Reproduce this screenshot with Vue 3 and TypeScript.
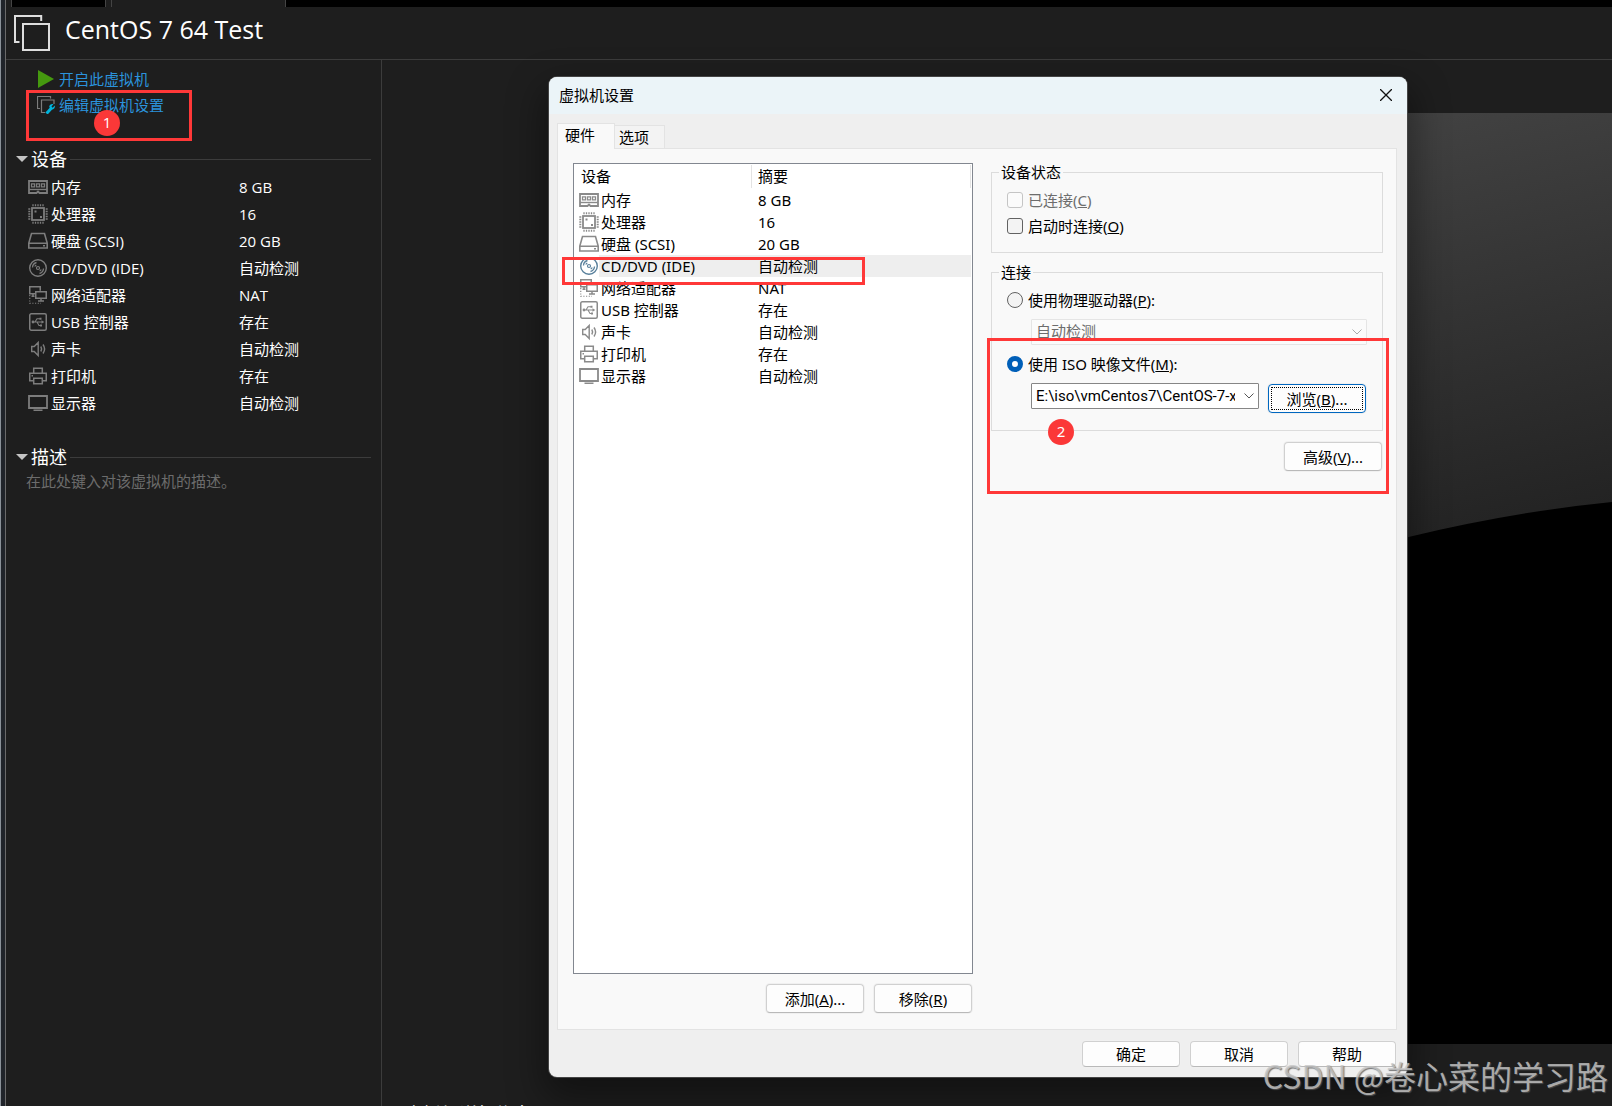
<script setup lang="ts">
import { ref } from 'vue'

interface Device {
  icon: string
  name: string
  summary: string
}

const devices: Device[] = [
  { icon: 'memory', name: '内存', summary: '8 GB' },
  { icon: 'cpu', name: '处理器', summary: '16' },
  { icon: 'disk', name: '硬盘 (SCSI)', summary: '20 GB' },
  { icon: 'cd', name: 'CD/DVD (IDE)', summary: '自动检测' },
  { icon: 'network', name: '网络适配器', summary: 'NAT' },
  { icon: 'usb', name: 'USB 控制器', summary: '存在' },
  { icon: 'sound', name: '声卡', summary: '自动检测' },
  { icon: 'printer', name: '打印机', summary: '存在' },
  { icon: 'display', name: '显示器', summary: '自动检测' },
]

const selected = ref('cd')
const connectAtPowerOn = ref(false)
const source = ref('iso')
const isoPath = 'E:\\iso\\vmCentos7\\CentOS-7-x86'
</script>

<template>
  <div class="app">
    <svg class="sprite" aria-hidden="true">
      <symbol id="memory" viewBox="0 0 20 20">
        <path d="M1 4h18v12h-7.500l-1.500-1.500-1.500 1.500H1z" fill="none" stroke="currentColor" stroke-width="1.800" />
        <path d="M1 12.500h18" stroke="currentColor" stroke-width="1.400" />
        <path d="M3.500 6.800h3v3h-3zM8.500 6.800h3v3h-3zM13.500 6.800h3v3h-3z" fill="none" stroke="currentColor" stroke-width="1.300" />
      </symbol>
      <symbol id="cpu" viewBox="0 0 20 20">
        <rect x="4" y="4" width="12" height="12" fill="none" stroke="currentColor" stroke-width="1.800" />
        <path d="M5 .3v2M7.500.3v2M10 .3v2M12.500.3v2M15 .3v2M5 17.700v2M7.500 17.700v2M10 17.700v2M12.500 17.700v2M15 17.700v2M.3 5h2M.3 7.500h2M.3 10h2M.3 12.500h2M.3 15h2M17.700 5h2M17.700 7.500h2M17.700 10h2M17.700 12.500h2M17.700 15h2" stroke="currentColor" stroke-width="1.300" />
        <path d="M6.500 6.500h2v2h-2zM12 12h2v2h-2z" fill="currentColor" />
      </symbol>
      <symbol id="disk" viewBox="0 0 20 20">
        <path d="M3.500 2.500h13L19.200 12v5H.8v-5zM.8 12.200h18.400" fill="none" stroke="currentColor" stroke-width="1.600" />
        <path d="M15 14h2v1.500h-2z" fill="currentColor" />
      </symbol>
      <symbol id="cd" viewBox="0 0 20 20">
        <circle cx="10" cy="10" r="8.300" fill="none" stroke="currentColor" stroke-width="1.400" />
        <circle cx="10" cy="10" r="1.500" fill="none" stroke="currentColor" stroke-width="1.200" />
        <path d="M4.500 9.500a5.500 5.500 0 0 1 4-5M15.500 10.500a5.500 5.500 0 0 1-4 5M6.800 8.500a3.500 3.500 0 0 1 1.500-1.500M13.200 11.500a3.500 3.500 0 0 1-1.500 1.500" fill="none" stroke="currentColor" stroke-width="1.300" />
      </symbol>
      <symbol id="network" viewBox="0 0 20 20">
        <path d="M7 8.800H1.750v-7h10.500v4M5 8.800v2.500M3.500 11.300h3M7.750 6.750h10.500v6.500H7.750zM13 13.300v2.400M10 16h6" fill="none" stroke="currentColor" stroke-width="1.500" />
        <path d="M1.750 10v8.250H13" fill="none" stroke="currentColor" stroke-width="1.200" stroke-dasharray="1.200 1.500" />
      </symbol>
      <symbol id="usb" viewBox="0 0 20 20">
        <rect x="1.750" y="1.750" width="16.500" height="16.500" rx="1.500" fill="none" stroke="currentColor" stroke-width="1.500" />
        <path d="M5 10h9M7 10l2-3.200h3M9 10l2 3.500h2" fill="none" stroke="currentColor" stroke-width="1.100" />
        <path d="M13.500 8.300l2.800 1.700-2.800 1.700zM11.500 5.800h2v2h-2zM12 12.500h2v2h-2z" fill="currentColor" />
        <circle cx="5" cy="10" r="1.400" fill="currentColor" />
      </symbol>
      <symbol id="sound" viewBox="0 0 20 20">
        <path d="M3.700 7.500h2.500l4-4v13l-4-4H3.700zM12.800 7.500q1.600 2.500 0 5M15 5.500q3.200 4.500 0 9" fill="none" stroke="currentColor" stroke-width="1.400" />
      </symbol>
      <symbol id="printer" viewBox="0 0 20 20">
        <path d="M5.700 7V2.200h8.600V7M5.500 14.800H1.750V7.200h16.500v7.600H14.500M5.700 12.200h8.600v5.600H5.700z" fill="none" stroke="currentColor" stroke-width="1.500" />
        <path d="M3.500 9h1.500v1.500H3.500z" fill="currentColor" />
      </symbol>
      <symbol id="display" viewBox="0 0 20 20">
        <path d="M1 3h18v12H1z" fill="none" stroke="currentColor" stroke-width="1.800" />
        <path d="M5.500 16.500h9v1.500h-9z" fill="currentColor" />
      </symbol>
    </svg>

    <div class="edge"></div>
    <div class="workspace">
      <div class="tabstrip">
        <span class="tab-gap"></span>
        <span class="tab-back"></span>
        <span class="tab-gap"></span>
        <span class="tab-front"></span>
      </div>

      <header class="header">
        <svg class="vm-icon" viewBox="0 0 36 36" aria-hidden="true">
          <path d="M27.200 6V1H1v26h4.500M9 9h26v26H9z" fill="none" stroke="#dedede" stroke-width="2" />
        </svg>
        <h1>CentOS 7 64 Test</h1>
      </header>

      <div class="content">
        <aside class="sidebar">
          <nav class="actions">
            <a href="#start">
              <svg viewBox="0 0 18 18" aria-hidden="true"><path d="M1 0v18l16-9z" fill="#45990f" /></svg>
              开启此虚拟机
            </a>
            <a href="#settings">
              <svg viewBox="0 0 18 18" aria-hidden="true">
                <path d="M13.500 2.500v-2H.5v12h2.500M17 8V4H4.500v12.500H8" fill="none" stroke="#7c7c7c" stroke-width="1.200" />
                <path d="M9.500 17.500l5-5.500" stroke="#00b4dc" stroke-width="3" />
                <path d="M18 9.500l-2.500 2.200-1-1.200L16.500 8q-4-.5-4.300 3l2.300 2.500q3.500 0 3.500-4z" fill="#00b4dc" />
              </svg>
              编辑虚拟机设置
            </a>
            <span class="mark mark-edit"></span>
            <span class="badge badge-one">1</span>
          </nav>

          <section>
            <h2><span class="caret"></span>设备</h2>
            <table class="summary">
              <tbody>
                <tr v-for="d in devices" :key="d.icon">
                  <td>
                    <div class="device">
                      <svg class="icon" aria-hidden="true"><use :href="'#' + d.icon" /></svg>
                      <span>{{ d.name }}</span>
                    </div>
                  </td>
                  <td>{{ d.summary }}</td>
                </tr>
              </tbody>
            </table>
          </section>

          <section>
            <h2><span class="caret"></span>描述</h2>
            <p class="placeholder">在此处键入对该虚拟机的描述。</p>
          </section>
        </aside>

        <main class="console">
          <div class="details">
            <h2><span class="caret"></span>虚拟机详细信息</h2>
          </div>
          <svg class="screen" viewBox="0 0 410 931" preserveAspectRatio="none" aria-hidden="true">
            <defs>
              <linearGradient id="glow" gradientUnits="userSpaceOnUse" x1="200" y1="0" x2="310" y2="430">
                <stop offset="0" stop-color="#424242" />
                <stop offset="1" stop-color="#222" />
              </linearGradient>
            </defs>
            <path d="M0 0h410v931H0z" fill="url(#glow)" />
            <path d="M0 485Q120 445 205 424Q309 399 410 389V931H0z" fill="#000" />
          </svg>
        </main>
      </div>
    </div>

    <div class="dialog" role="dialog" aria-labelledby="dialog-title">
      <div class="titlebar">
        <h3 id="dialog-title">虚拟机设置</h3>
        <button class="close" type="button" aria-label="关闭">
          <svg viewBox="0 0 12 12" aria-hidden="true"><path d="M0 0l12 12M12 0L0 12" stroke="#111" stroke-width="1.300" /></svg>
        </button>
      </div>

      <div class="dialog-body">
        <div class="tabs" role="tablist">
          <button class="tab active" type="button" role="tab" aria-selected="true">硬件</button>
          <button class="tab" type="button" role="tab" aria-selected="false">选项</button>
        </div>

        <div class="panel">
          <div class="hardware">
            <div class="listbox">
              <table>
                <colgroup><col class="col-name" /><col /></colgroup>
                <thead>
                  <tr>
                    <th><div>设备</div></th>
                    <th><div>摘要</div></th>
                  </tr>
                </thead>
                <tbody>
                  <tr v-for="d in devices" :key="d.icon" :class="{ selected: d.icon === selected }" @click="selected = d.icon">
                    <td>
                      <div class="device">
                        <svg class="icon" aria-hidden="true"><use :href="'#' + d.icon" /></svg>
                        <span>{{ d.name }}</span>
                      </div>
                    </td>
                    <td>{{ d.summary }}</td>
                  </tr>
                </tbody>
              </table>
            </div>
            <div class="buttons">
              <button class="btn" type="button">添加(<u>A</u>)...</button>
              <button class="btn" type="button">移除(<u>R</u>)</button>
            </div>
            <span class="mark mark-cd"></span>
          </div>

          <form class="options" @submit.prevent>
            <fieldset>
              <legend>设备状态</legend>
              <label class="choice disabled"><input type="checkbox" disabled /><span>已连接(<u>C</u>)</span></label>
              <label class="choice"><input v-model="connectAtPowerOn" type="checkbox" /><span>启动时连接(<u>O</u>)</span></label>
            </fieldset>

            <fieldset class="connection">
              <legend>连接</legend>
              <label class="choice"><input v-model="source" type="radio" name="source" value="drive" /><span>使用物理驱动器(<u>P</u>):</span></label>
              <div class="combo disabled">
                <select aria-label="物理驱动器" disabled><option>自动检测</option></select>
                <svg viewBox="0 0 10 6" aria-hidden="true"><path d="M.5.500L5 5 9.500.500" fill="none" stroke="currentColor" /></svg>
              </div>
              <label class="choice"><input v-model="source" type="radio" name="source" value="iso" /><span>使用 ISO 映像文件(<u>M</u>):</span></label>
              <div class="file">
                <div class="combo">
                  <select aria-label="ISO 映像文件"><option>{{ isoPath }}</option></select>
                  <svg viewBox="0 0 10 6" aria-hidden="true"><path d="M.5.500L5 5 9.500.500" fill="none" stroke="currentColor" /></svg>
                </div>
                <button class="btn focused" type="button">浏览(<u>B</u>)...</button>
              </div>
            </fieldset>

            <div class="buttons advanced">
              <button class="btn" type="button">高级(<u>V</u>)...</button>
            </div>
            <span class="mark mark-iso"></span>
            <span class="badge badge-two">2</span>
          </form>
        </div>

        <div class="buttons footer">
          <button class="btn" type="button">确定</button>
          <button class="btn" type="button">取消</button>
          <button class="btn" type="button">帮助</button>
        </div>
      </div>
    </div>

    <div class="watermark">CSDN @卷心菜的学习路</div>
  </div>
</template>

<style>
body {
  background: #1e1e1e;
}
</style>

<style scoped>
* {
  box-sizing: border-box;
}

.app {
  position: relative;
  display: flex;
  height: 100vh;
  overflow: hidden;
  background: #1e1e1e;
  color: #fff;
  font: 15px/20px "Open Sans", "Noto Sans CJK SC", sans-serif;
}

.sprite {
  position: absolute;
  width: 0;
  height: 0;
}

h1,
h2,
h3,
p {
  margin: 0;
  font-weight: 400;
}

.edge {
  flex: none;
  width: 6px;
  border-left: 1px solid #8b9299;
  border-right: 1px solid #6a6a6a;
  background: #20242a;
}

.workspace {
  flex: 1;
  min-width: 0;
  display: flex;
  flex-direction: column;
}

.tabstrip {
  flex: none;
  display: flex;
  height: 7px;
  background: #000;
}

.tab-gap {
  width: 5px;
  background: #1e1e1e;
}

.tab-back {
  width: 95px;
  border: solid #444;
  border-width: 0 1px;
}

.tab-front {
  width: 175px;
  border: solid #444;
  border-width: 0 1px;
  background: #1e1e1e;
}

.header {
  flex: none;
  display: flex;
  gap: 15px;
  height: 53px;
  padding: 8px 8px 0;
  border-bottom: 1px solid #3c3c3c;
}

.vm-icon {
  width: 36px;
  height: 36px;
}

h1 {
  font-size: 25px;
  line-height: 28px;
}

.content {
  flex: 1;
  min-height: 0;
  display: flex;
}

.sidebar {
  flex: none;
  width: 376px;
  padding: 6px 10px 0;
  border-right: 1px solid #3c3c3c;
}

.actions {
  position: relative;
  display: flex;
  flex-direction: column;
  padding-left: 21px;
}

.actions a {
  display: flex;
  align-items: center;
  gap: 4px;
  height: 26px;
  color: #2b93dc;
  text-decoration: none;
}

.actions svg {
  width: 18px;
  height: 18px;
}

section {
  margin-top: 27px;
}

h2 {
  display: flex;
  align-items: center;
  gap: 3px;
  height: 28px;
  font-size: 18px;
  line-height: 28px;
}

section h2::after {
  content: "";
  flex: 1;
  border-top: 1px solid #3c3c3c;
}

.caret {
  border: solid transparent;
  border-width: 6px 6px 0;
  border-top-color: #c4c4c4;
}

table {
  width: 100%;
  border-collapse: collapse;
  table-layout: fixed;
}

td,
th {
  padding: 0;
  font-weight: 400;
  text-align: left;
}

.summary tr {
  height: 27px;
}

.summary td:first-child {
  width: 223px;
  padding-left: 12px;
}

.device {
  display: flex;
  align-items: center;
}

.device span {
  flex: 1;
  padding-left: 2px;
}

.summary .device span {
  padding-left: 3px;
}

.icon {
  width: 20px;
  height: 20px;
  color: #7d7d7d;
}

.placeholder {
  padding-left: 10px;
  color: #6c6c6c;
}

.console {
  flex: 1;
  min-width: 0;
  display: flex;
  padding: 53px 0 62px;
}

.details {
  flex: 2;
  display: flex;
  align-items: flex-end;
  padding-left: 8px;
}

.details h2 {
  flex: none;
  margin-bottom: -84px;
}

.screen {
  flex: 1;
  min-width: 0;
  height: 100%;
}

.dialog {
  position: absolute;
  top: 77px;
  right: 205px;
  bottom: 29px;
  left: 549px;
  display: flex;
  flex-direction: column;
  border-radius: 8px;
  background: #efefef;
  box-shadow: 0 0 0 1px #444, 0 16px 36px 6px rgba(0, 0, 0, 0.4);
  color: #000;
  font-family: "Noto Sans", "Noto Sans CJK SC", sans-serif;
}

.titlebar {
  flex: none;
  display: flex;
  align-items: center;
  justify-content: space-between;
  height: 37px;
  padding: 0 10px 2px;
  border-radius: 8px 8px 0 0;
  background: #ebf4f8;
}

h3 {
  font-size: 15px;
}

button,
select {
  font: inherit;
  color: inherit;
}

.close {
  display: flex;
  padding: 5px;
  border: 0;
  background: none;
}

.close svg {
  width: 12px;
  height: 12px;
}

.dialog-body {
  flex: 1;
  min-height: 0;
  display: flex;
  flex-direction: column;
  padding: 9px 10px 10px 8px;
}

.tabs {
  flex: none;
  display: flex;
  align-items: flex-end;
  height: 25px;
}

.tab {
  height: 23px;
  padding: 0 15px 0 4px;
  border: 1px solid #e3e3e3;
  border-width: 1px 1px 0 0;
  background: #f3f3f3;
}

.tab.active {
  z-index: 1;
  height: 26px;
  margin-bottom: -1px;
  padding: 0 19px 4px 7px;
  border-width: 1px 1px 0;
  background: #f9f9f9;
}

.panel {
  flex: 1;
  min-height: 0;
  display: flex;
  gap: 18px;
  padding: 14px 13px 15px 15px;
  border: 1px solid #e3e3e3;
  background: #f9f9f9;
}

.hardware {
  position: relative;
  flex: 400 1 0;
  min-width: 0;
  display: flex;
  flex-direction: column;
}

.listbox {
  flex: 1;
  padding-right: 1px;
  border: 1px solid #828790;
  background: #fff;
}

.col-name {
  width: 178px;
}

.listbox tr {
  height: 22px;
}

.listbox th {
  height: 25px;
}

.listbox th div {
  height: 23px;
  padding-left: 7px;
  border-right: 1px solid #e3e3e3;
  line-height: 22px;
}

.listbox td:first-child {
  padding-left: 5px;
}

.listbox td + td,
.listbox th + th div {
  padding-left: 6px;
}

.listbox .icon {
  color: #8a8a8a;
}

.listbox .device span {
  line-height: 22px;
}

.selected td + td,
.selected .device span {
  background: #eee;
}

.listbox .selected .icon {
  color: #59809c;
}

.buttons {
  flex: none;
  display: flex;
  justify-content: flex-end;
  gap: 10px;
  margin-top: 10px;
}

.panel .buttons,
.file {
  padding-right: 1px;
}

.btn {
  flex: none;
  width: 98px;
  height: 29px;
  padding: 0;
  border: 1px solid #d0d0d0;
  border-bottom-color: #b9b9b9;
  border-radius: 4px;
  background: #fdfdfd;
  box-shadow: 0 0 0 1px #f0f0f0;
}

.hardware .buttons {
  padding-bottom: 1px;
}

.btn.focused {
  border-color: #0067c0;
  outline: 1px dotted #000;
  outline-offset: -4px;
}

.footer {
  margin-top: 11px;
  padding-right: 1px;
}

.footer .btn {
  height: 26px;
}

.options {
  position: relative;
  flex: 392 1 0;
  min-width: 0;
}

fieldset {
  min-width: 0;
  margin: 0;
  padding: 6px 15px 13px;
  border: 1px solid #dcdcdc;
}

.connection {
  margin-top: 10px;
  padding-bottom: 17px;
}

legend {
  height: 18px;
  margin-left: -8px;
  padding: 0 2px;
  line-height: 18px;
}

.choice {
  display: flex;
  align-items: center;
  gap: 5px;
  height: 26px;
}

.choice.disabled {
  color: #6d6d6d;
}

.choice input {
  appearance: none;
  flex: none;
  width: 16px;
  height: 16px;
  margin: 0;
  border: 1px solid #626262;
  border-radius: 3px;
  background: #f3f3f3;
}

.choice input:disabled {
  border-color: #c5c5c5;
  background: #fbfbfb;
}

.choice input[type="radio"] {
  border-radius: 50%;
}

.choice input[type="radio"]:checked {
  border: 5px solid #005fb8;
  background: #fff;
}

.combo {
  position: relative;
  flex: 1;
  min-width: 0;
  height: 26px;
  margin: 6px 0 6px 24px;
}

.combo select {
  appearance: none;
  width: 100%;
  height: 100%;
  padding: 0 23px 0 4px;
  border: 1px solid #868686;
  border-radius: 1px;
  background: #fff;
  font-family: Roboto, "Noto Sans CJK SC", sans-serif;
  opacity: 1;
}

.combo.disabled select {
  border-color: #e5e5e5;
  background: #fbfbfb;
  color: #6d6d6d;
}

.combo svg {
  position: absolute;
  top: 10px;
  right: 5px;
  width: 10px;
  height: 6px;
  color: #555;
  pointer-events: none;
}

.combo.disabled svg {
  color: #aaa;
}

.file {
  display: flex;
  align-items: flex-end;
  gap: 9px;
  height: 30px;
  margin-top: 6px;
}

.file .combo {
  align-self: flex-start;
  margin: 0 0 0 24px;
}

.advanced {
  margin-top: 11px;
}

.mark {
  position: absolute;
  border: 3px solid #ff3838;
  pointer-events: none;
}

.mark-edit {
  top: 24px;
  left: 10px;
  width: 166px;
  height: 51px;
}

.mark-cd {
  top: 94px;
  left: -11px;
  width: 303px;
  height: 28px;
}

.mark-iso {
  top: 175px;
  right: -6px;
  left: -4px;
  height: 156px;
}

.badge {
  position: absolute;
  width: 26px;
  height: 26px;
  border-radius: 50%;
  background: #fb3838;
  color: #fff;
  line-height: 24px;
  text-align: center;
}

.badge-one {
  top: 44px;
  left: 78px;
}

.badge-two {
  top: 256px;
  left: 57px;
}

.watermark {
  position: absolute;
  right: 4px;
  bottom: 7px;
  color: rgba(200, 200, 200, 0.8);
  font: 32px/48px "Noto Sans CJK SC", sans-serif;
  text-shadow: 1px 1px 1px rgba(90, 90, 90, 0.8);
  white-space: nowrap;
}
</style>
